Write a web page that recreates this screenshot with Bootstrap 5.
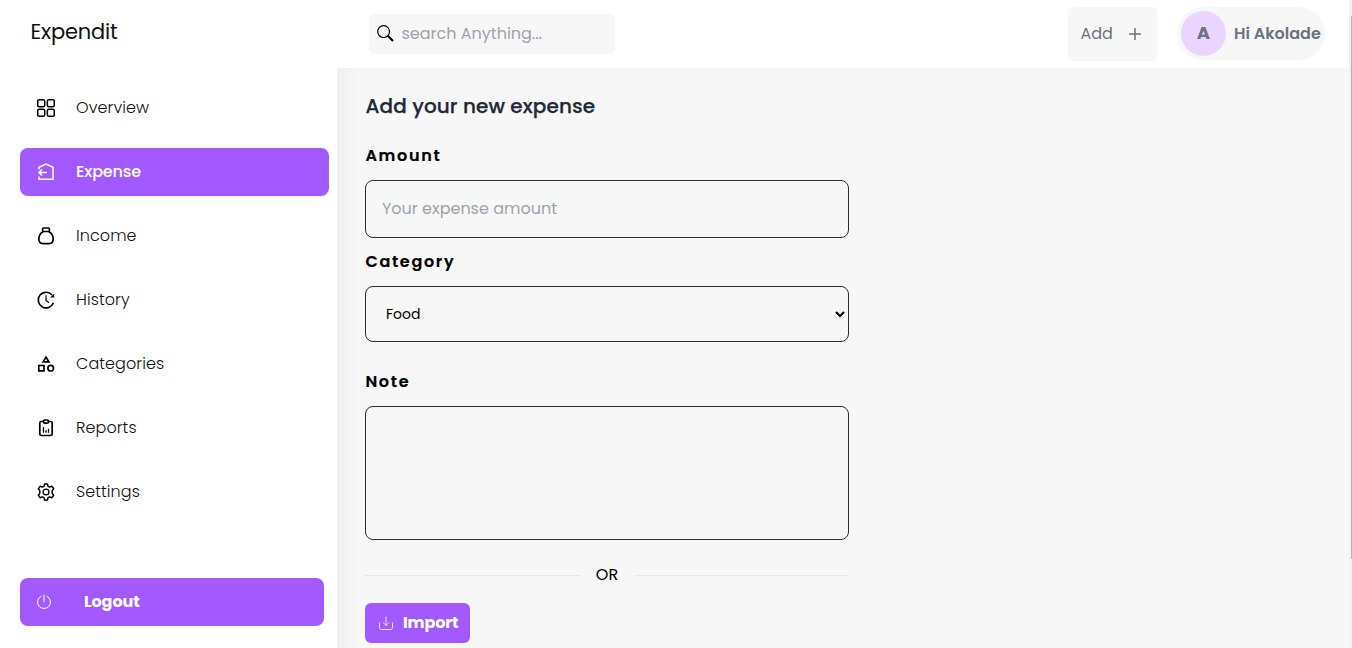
<!DOCTYPE html>
<html lang="en">
<head>
<meta charset="utf-8">
<meta name="viewport" content="width=device-width, initial-scale=1">
<title>Expendit</title>
<link href="https://cdn.jsdelivr.net/npm/bootstrap@5.3.0/dist/css/bootstrap.min.css" rel="stylesheet">
<style>
body{font-family:Poppins,Inter,"Open Sans",sans-serif;font-size:16px;line-height:24px;color:#000;background:#fff;height:100vh;overflow:hidden}
.topbar{height:68px;padding-right:24px}
.brand{font-size:21px;padding:0 0 5px 30.5px;width:369px;color:#111;letter-spacing:-.2px}
.searchbox{width:246px;height:40px;background:#f7f7f7;border-radius:6px;padding:0 8px;margin-top:-1px}
.searchbox input{color:#9ca3af;outline:0;margin-left:7.5px}
.searchbox input::placeholder,.amount::placeholder{color:#9ca3af;opacity:1}
.addbtn{width:89px;height:54px;background:#f7f7f7;border-radius:6px;color:#6b7280;padding:0 12px 0 12.5px}
.profile{width:148px;height:53px;background:#f7f7f7;border-radius:27px;color:#6b7280;padding-left:4px;margin:-2px 0 0 20px;font-weight:600}
.hello{padding-top:1px}
.avatar{width:45px;height:45px;background:#e9d5ff;font-size:18px;font-weight:700}
.sidebar{width:337px;padding:16px 8px 0 20px}
.side{height:48px;border-radius:8px;padding-left:16px;color:#111;font-weight:300;letter-spacing:.08px}
.side svg{margin-right:20px}
.side.on{background:#a259ff;color:#fff;font-weight:500;letter-spacing:-.12px}
.logout{width:304px;height:48px;margin-top:62px;background:#a259ff;color:#fff;border-radius:8px;padding-left:16px;gap:32px;font-weight:700;letter-spacing:-.1px}
.content-area{background:linear-gradient(90deg,#eee 0,#f3f3f3 12px,#f7f7f7 24px);padding:24px 0 0 28px}
.entry{width:484px}
h1{font-size:20px;line-height:28px;font-weight:500;color:#1f2937;margin:0;letter-spacing:.1px;padding-left:.5px;-webkit-text-stroke:.25px #1f2937}
label{display:block;font-weight:600;letter-spacing:1.7px;line-height:24px;padding:12px 0 12px .4px;-webkit-text-stroke:.2px #000}
.field{display:block;width:100%;border:1px solid #2d2d2d;border-radius:8px;background:transparent;padding:0 16px;outline:0}
.amount{height:58px;padding-bottom:2px}
.category{height:56px;font-size:14px;color:#000;margin-bottom:16px}
.note{height:134px;resize:none}
.or-row{margin-top:23px}
.rule{height:1px;background:#e5e7eb}
.import{width:105px;height:40px;background:#a259ff;border-radius:6px;color:#fff;font-weight:700;padding-left:13px;letter-spacing:-.1px;gap:9px}
.track{width:3px;background:#f1f1f1;padding:16px 0 0 2px}
.thumb{height:543px;background:#b5b5b5}
</style>
<script src="https://cdn.jsdelivr.net/npm/bootstrap@5.3.0/dist/js/bootstrap.bundle.min.js"></script>
</head>
<body class="d-flex">
<div class="flex-grow-1 d-flex flex-column">
<header class="topbar d-flex align-items-center flex-shrink-0">
  <div class="brand">Expendit</div>
  <div class="searchbox d-flex align-items-center">
    <svg width="17" height="17" viewBox="0 0 17 17" fill="none" stroke="#000"><circle cx="6.6" cy="6.6" r="5.9" stroke-width="1.2"/><path d="M10.8 10.8 16 16" stroke-width="2"/></svg>
    <input class="border-0 bg-transparent p-0 w-75" placeholder="search Anything...">
  </div>
  <div class="addbtn d-flex align-items-center justify-content-between ms-auto"><span>Add</span>
    <svg width="20" height="20" viewBox="0 0 20 20" stroke="#6b7280" stroke-width="1.5"><path d="M10 4v12M4 10h12"/></svg>
  </div>
  <div class="profile d-flex align-items-center"><span class="avatar rounded-circle d-flex align-items-center justify-content-center me-2">A</span><span class="hello text-nowrap">Hi Akolade</span></div>
</header>
<div class="d-flex flex-grow-1">
<aside class="sidebar">
  <nav class="d-flex flex-column gap-3">
    <a class="side d-flex align-items-center text-decoration-none"><svg width="20" height="20" viewBox="0 0 20 20" fill="none" stroke="#000" stroke-width="1.5"><rect x="1.7" y="1.7" width="7" height="7" rx="1.5"/><rect x="11.3" y="1.7" width="7" height="7" rx="1.5"/><rect x="1.7" y="11.3" width="7" height="7" rx="1.5"/><rect x="11.3" y="11.3" width="7" height="7" rx="1.5"/></svg><span>Overview</span></a>
    <a class="side on d-flex align-items-center text-decoration-none"><svg width="20" height="20" viewBox="0 0 20 20" fill="none" stroke="#fff" stroke-width="1.5"><path d="M3 7.200V5.200L10 2l7 3.200V17.300H3V14.500M11 10.500H3.200M6 7.400 3 10.500l3 3.100"/></svg><span>Expense</span></a>
    <a class="side d-flex align-items-center text-decoration-none"><svg width="20" height="20" viewBox="0 0 20 20" fill="none" stroke="#000" stroke-width="1.7"><rect x="6.600" y="2" width="6.800" height="3.500" rx="1"/><path d="M7.300 5.500C4.600 7 2.800 9.700 2.800 13C2.800 16 4.200 17.600 7 17.600H13C15.800 17.600 17.200 16 17.200 13C17.200 9.700 15.400 7 12.700 5.500"/></svg><span>Income</span></a>
    <a class="side d-flex align-items-center text-decoration-none"><svg width="20" height="20" viewBox="0 0 20 20" fill="none" stroke="#000" stroke-width="1.6"><path d="M17.400 12.700A7.800 7.800 0 1 1 16 5"/><path d="M10 5.300v5.200l3 2.300" stroke-width="1.200"/><path d="M18.200 3.600v4h-4z" fill="#000" stroke="none"/></svg><span>History</span></a>
    <a class="side d-flex align-items-center text-decoration-none"><svg width="20" height="20" viewBox="0 0 20 20" fill="none" stroke="#000" stroke-width="1.700"><path d="M10 3.200 7.100 7.900h5.800zM2.800 11.500h5.200v5.400H2.800z"/><circle cx="14.700" cy="14.200" r="2.800"/></svg><span>Categories</span></a>
    <a class="side d-flex align-items-center text-decoration-none"><svg width="20" height="20" viewBox="0 0 20 20" fill="none" stroke="#000" stroke-width="1.700"><rect x="3.800" y="3.500" width="12.400" height="14" rx="1.500"/><rect x="7.500" y="2" width="5" height="3.200" rx="1.500" fill="#fff"/><path d="M7.500 9v5.800M10 12.300v2.500M12.500 10.800v4" stroke-width="1.300"/></svg><span>Reports</span></a>
    <a class="side d-flex align-items-center text-decoration-none"><svg width="20" height="20" viewBox="0 0 20 20" fill="none" stroke="#000" stroke-width="1.500" stroke-linejoin="round"><path d="M8.600 1.900h2.800l.5 2.300 1.600.9 2.300-.8 1.900 2.400-1.500 1.900v2.800l1.500 1.900-1.900 2.400-2.300-.8-1.600.9-.5 2.300H8.600l-.5-2.300-1.600-.9-2.300.8-1.900-2.400 1.500-1.900V8.600L2.300 6.700l1.900-2.400 2.300.8 1.600-.9z"/><circle cx="10" cy="10" r="2.900" stroke-width="1.300"/></svg><span>Settings</span></a>
  </nav>
  <div class="logout d-flex align-items-center"><svg width="16" height="16" viewBox="0 0 16 16" fill="none" stroke="#fff"><path d="M5 2.200a6.500 6.500 0 1 0 6 0M8 1v7" stroke-linecap="round"/></svg><span>Logout</span></div>
</aside>
<main class="content-area flex-grow-1">
 <form class="entry">
  <h1>Add your new expense</h1>
  <label for="amount" class="mt-2 pt-3">Amount</label>
  <input id="amount" class="field amount" placeholder="Your expense amount">
  <label for="category">Category</label>
  <select id="category" class="field category"><option>Food</option></select>
  <label for="note">Note</label>
  <textarea id="note" class="field note"></textarea>
  <div class="or-row d-flex align-items-center"><div class="rule flex-grow-1"></div><span class="mx-3">OR</span><div class="rule flex-grow-1"></div></div>
  <div class="import d-flex align-items-center mt-3"><svg width="16" height="16" viewBox="0 0 16 16" fill="none" stroke="#fff" stroke-opacity=".8"><path d="M1.500 7.500v5q0 2 2 2h9q2 0 2-2v-5M8 1.500v9M5 7.500l3 3 3-3"/></svg><span>Import</span></div>
 </form>
</main>
</div>
</div>
<div class="track flex-shrink-0"><div class="thumb"></div></div>
</body>
</html>
